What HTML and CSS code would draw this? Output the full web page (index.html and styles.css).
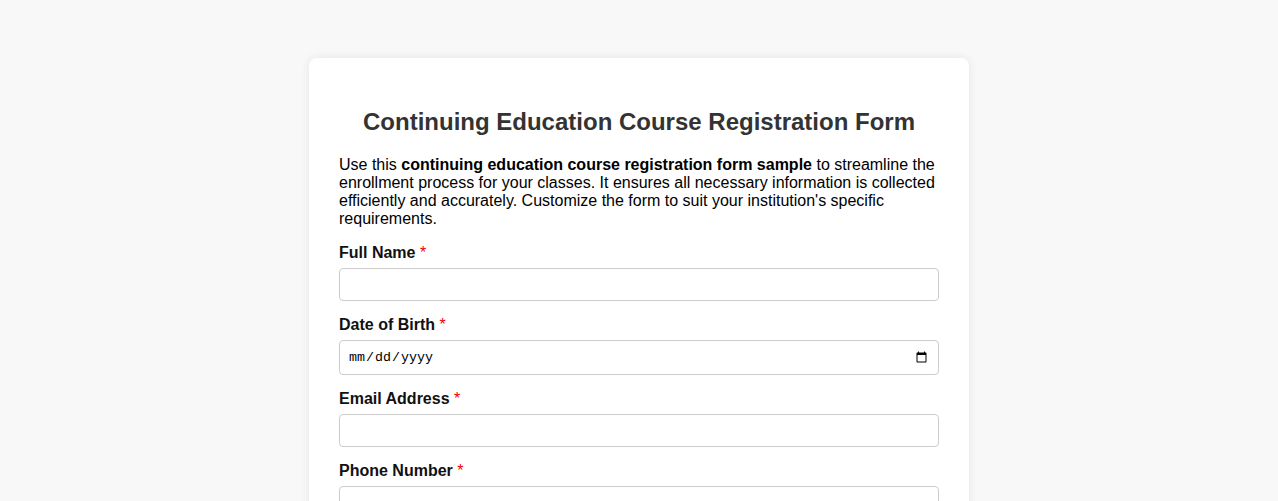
FILE: index.html
```html
<!DOCTYPE html>
<html lang="en">
<head>
<meta charset="utf-8">
<title>Continuing Education Course Registration Form</title>
<link rel="stylesheet" href="styles.css">
</head>
<body>
<div class="page">
  <form class="card">
    <h1 class="title">Continuing Education Course Registration Form</h1>
    <p class="intro">Use this <strong>continuing education course registration form sample</strong> to streamline the enrollment process for your classes. It ensures all necessary information is collected efficiently and accurately. Customize the form to suit your institution's specific requirements.</p>
    <div class="field">
      <label class="label" for="name">Full Name <span class="req">*</span></label>
      <input class="input" id="name" type="text">
    </div>
    <div class="field">
      <label class="label" for="dob">Date of Birth <span class="req">*</span></label>
      <input class="input input-date" id="dob" type="date">
    </div>
    <div class="field">
      <label class="label" for="email">Email Address <span class="req">*</span></label>
      <input class="input" id="email" type="email">
    </div>
    <div class="field">
      <label class="label" for="phone">Phone Number <span class="req">*</span></label>
      <input class="input" id="phone" type="tel">
    </div>
  </form>
</div>
</body>
</html>
```
FILE: styles.css
```css
html, body {
  margin: 0;
  padding: 0;
  background: #f8f8f8;
  font-family: "Liberation Sans", Arial, sans-serif;
}
.page {
  padding: 58px 20px 40px;
  display: flex;
  justify-content: center;
}
.card {
  width: 600px;
  background: #fff;
  border-radius: 8px;
  padding: 30px;
  box-shadow: 0 0 10px rgba(0, 0, 0, 0.08);
}
.title {
  margin: 20px 0 20px;
  font-size: 24px;
  font-weight: bold;
  text-align: center;
  color: #333;
}
.intro {
  margin: 0 0 16px;
  font-size: 16px;
  color: #000;
}
.field {
  margin-bottom: 15px;
}
.label {
  display: block;
  font-weight: bold;
  font-size: 16px;
  color: #111;
  margin-bottom: 6px;
}
.req {
  color: #e00;
  font-weight: normal;
}
.input {
  display: block;
  box-sizing: border-box;
  width: 100%;
  padding: 8px;
  border: 1px solid #ccc;
  border-radius: 4px;
  background: #fff;
  font-size: 13.333px;
}
.input-date {
  font-family: "Liberation Mono", monospace;
}
```
